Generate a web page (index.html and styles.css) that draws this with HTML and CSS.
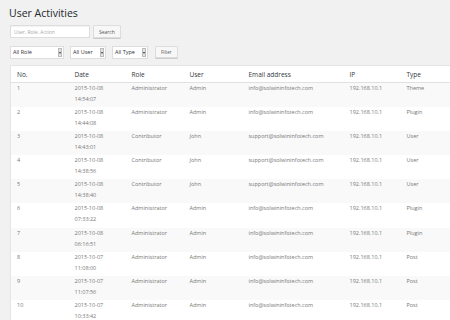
FILE: index.html
```html
<!doctype html>
<html>
<head>
    <meta charset="utf-8">
    <link rel="stylesheet" href="styles.css">
</head>
<body>
    <div class="wrap">
        <h1 class="title">User Activities</h1>

        <div class="searchbox">
            <input type="text" class="searchinput" placeholder="User, Role, Action">
            <button class="btn">Search</button>
        </div>

        <div class="filters">
            <div class="sel sel-role">All Role<span class="arrow"></span></div>
            <div class="sel sel-user">All User<span class="arrow"></span></div>
            <div class="sel sel-type">All Type<span class="arrow"></span></div>
            <button class="btn btn-small">Filter</button>
        </div>

        <table class="activities">
            <colgroup>
                <col style="width:58px">
                <col style="width:57px">
                <col style="width:58px">
                <col style="width:59px">
                <col style="width:101px">
                <col style="width:57px">
                <col style="width:70px">
            </colgroup>
            <thead>
                <tr>
                    <th>No.</th><th>Date</th><th>Role</th><th>User</th><th>Email address</th><th>IP</th><th>Type</th>
                </tr>
            </thead>
            <tbody>
                <tr><td>1</td><td>2015-10-08<br>14:54:07</td><td>Administrator</td><td>Admin</td><td>info@solwininfotech.com</td><td>192.168.10.1</td><td>Theme</td></tr>
                <tr><td>2</td><td>2015-10-08<br>14:44:08</td><td>Administrator</td><td>Admin</td><td>info@solwininfotech.com</td><td>192.168.10.1</td><td>Plugin</td></tr>
                <tr><td>3</td><td>2015-10-08<br>14:43:01</td><td>Contributor</td><td>John</td><td>support@solwininfotech.com</td><td>192.168.10.1</td><td>User</td></tr>
                <tr><td>4</td><td>2015-10-08<br>14:38:56</td><td>Contributor</td><td>John</td><td>support@solwininfotech.com</td><td>192.168.10.1</td><td>User</td></tr>
                <tr><td>5</td><td>2015-10-08<br>14:38:40</td><td>Contributor</td><td>John</td><td>support@solwininfotech.com</td><td>192.168.10.1</td><td>User</td></tr>
                <tr><td>6</td><td>2015-10-08<br>07:33:22</td><td>Administrator</td><td>Admin</td><td>info@solwininfotech.com</td><td>192.168.10.1</td><td>Plugin</td></tr>
                <tr><td>7</td><td>2015-10-08<br>06:16:51</td><td>Administrator</td><td>Admin</td><td>info@solwininfotech.com</td><td>192.168.10.1</td><td>Plugin</td></tr>
                <tr><td>8</td><td>2015-10-07<br>11:08:00</td><td>Administrator</td><td>Admin</td><td>info@solwininfotech.com</td><td>192.168.10.1</td><td>Post</td></tr>
                <tr><td>9</td><td>2015-10-07<br>11:07:56</td><td>Administrator</td><td>Admin</td><td>info@solwininfotech.com</td><td>192.168.10.1</td><td>Post</td></tr>
                <tr><td>10</td><td>2015-10-07<br>10:33:42</td><td>Administrator</td><td>Admin</td><td>info@solwininfotech.com</td><td>192.168.10.1</td><td>Post</td></tr>
            </tbody>
        </table>
    </div>
</body>
</html>
```

FILE: styles.css
```css
html, body {
    margin: 0;
    background-color: #f1f1f1;
    font-family: 'Open Sans', sans-serif;
    color: #444;
    overflow: hidden;
}

.wrap {
    padding: 6px 0 0 10px;
    width: 470px;
}

.title {
    margin: 0 0 4px -1px;
    font-size: 10.5px;
    font-weight: 400;
    line-height: 15px;
    color: #23282d;
}

.searchbox {
    display: flex;
    gap: 3px;
    height: 13px;
}

.searchinput {
    box-sizing: border-box;
    width: 80px;
    height: 13px;
    margin: 0;
    padding: 0 3px;
    border: 1px solid #ddd;
    background: #fff;
    font-family: inherit;
    font-size: 5px;
    color: #333;
    box-shadow: inset 0 1px 1px rgba(0,0,0,0.05);
}

.searchinput::placeholder {
    color: #aaa;
}

.btn {
    box-sizing: border-box;
    height: 13px;
    margin: 0;
    padding: 0 5px;
    border: 1px solid #ddd;
    border-radius: 1px;
    background: #f7f7f7;
    font-family: inherit;
    font-size: 5px;
    color: #555;
    box-shadow: 0 1px 0 #ccc;
}

.btn-small {
    height: 12px;
    font-size: 4.5px;
    padding: 0 5px;
    margin-left: 1px;
}

.filters {
    display: flex;
    align-items: center;
    gap: 6px;
    margin-top: 7px;
    height: 14px;
}

.sel {
    box-sizing: border-box;
    position: relative;
    height: 13px;
    padding: 0 8px 0 2px;
    border: 1px solid #ddd;
    background: #fff;
    font-size: 5.5px;
    line-height: 11px;
    color: #333;
    white-space: nowrap;
}

.sel-role { width: 54px; }
.sel-user { width: 36px; }
.sel-type { width: 36px; }

.arrow {
    position: absolute;
    right: 1px;
    top: 1px;
    width: 4px;
    height: 9px;
    background: #e2e2e2;
    border: 1px solid #bbb;
    box-sizing: border-box;
}

.arrow::after {
    content: "";
    position: absolute;
    left: 0;
    top: 3px;
    border-left: 1px solid transparent;
    border-right: 1px solid transparent;
    border-top: 2px solid #333;
}

.activities {
    margin-top: 6px;
    width: 460px;
    table-layout: fixed;
    border-collapse: collapse;
    background: #fff;
    border: 1px solid #e5e5e5;
    box-shadow: 0 1px 1px rgba(0,0,0,0.04);
}

.activities th {
    height: 16px;
    padding: 0 6px;
    text-align: left;
    font-weight: 400;
    font-size: 6.5px;
    color: #32373c;
    border-bottom: 1px solid #e1e1e1;
}

.activities td {
    height: 24.2px;
    padding: 0 6px;
    vertical-align: top;
    box-sizing: border-box;
    font-size: 5.5px;
    line-height: 11px;
    color: #777;
    white-space: nowrap;
}

.activities tbody tr:nth-child(odd) {
    background: #f9f9f9;
}
```
